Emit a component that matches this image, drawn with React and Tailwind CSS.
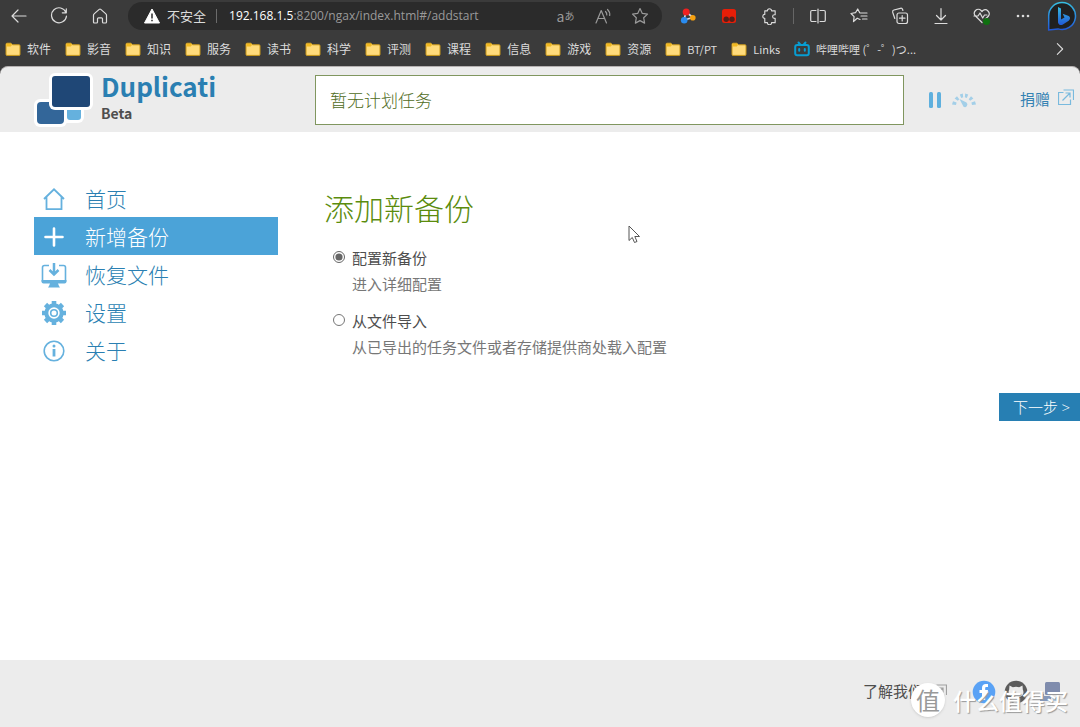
import { useState } from 'react'

const folders = ['软件', '影音', '知识', '服务', '读书', '科学', '评测', '课程', '信息', '游戏', '资源']

/* Browser icons */
const Line = ({ children, size = 18, className = '' }) => (
  <svg width={size} height={size} viewBox="0 0 18 18" fill="none" stroke="currentColor" strokeWidth="1.2" strokeLinecap="round" strokeLinejoin="round" className={className} aria-hidden="true">
    {children}
  </svg>
)

const BackIcon = () => <Line><path d="M16 9H2M8 3L2 9l6 6" /></Line>
const ReloadIcon = () => <Line><path d="M16 5.5A7.5 7.5 0 1 0 16.5 9M16.3 1.8v4h-4" /></Line>
const HomeIcon = () => <Line><path d="M2.500 8.200c0-.6.200-1 .6-1.300L8.200 2.400c.5-.4 1.100-.4 1.600 0l5.100 4.500c.4.3.6.7.6 1.300V15c0 .6-.4 1-1 1h-2c-.6 0-1-.4-1-1v-3.200c0-.6-.4-1-1-1h-3c-.6 0-1 .4-1 1V15c0 .6-.4 1-1 1h-2c-.6 0-1-.4-1-1z" /></Line>
const StarIcon = () => <Line><path d="M9 1.500l2.300 4.900 5.200.7-3.800 3.700.9 5.300L9 13.600l-4.600 2.500.9-5.300L1.500 7.100l5.200-.7z" /></Line>

const TranslateIcon = () => (
  <span className="flex items-center text-[14px] leading-none" aria-hidden="true">a<span className="text-[10px]">あ</span></span>
)

const ReadAloudIcon = () => (
  <Line>
    <path d="M2 16L7.200 3.500 12.500 16M4 11.500h6.800M11.500 4.500q1.500 1.500 1.300 3.500M13.500 2.500q2.700 2.500 2.200 6" />
  </Line>
)

const MoleculeIcon = () => (
  <svg width="16" height="16" viewBox="0 0 16 16" aria-hidden="true">
    <path d="M6 4L4 12M6 4l7 5.500M4 12l9-2.500" stroke="#d8d8e8" strokeWidth="1.600" />
    <circle cx="6.200" cy="4" r="3.500" fill="#f02020" />
    <circle cx="4.200" cy="12.200" r="3.300" fill="#2a8cf0" />
    <circle cx="12.800" cy="9.800" r="2.800" fill="#f5a010" />
  </svg>
)

const RedIcon = () => (
  <svg width="16" height="16" viewBox="0 0 16 16" aria-hidden="true">
    <rect x="1" y="1" width="14" height="14" rx="2.500" fill="#e61e08" />
    <circle cx="5.200" cy="11.200" r="2.700" fill="#53201b" />
    <circle cx="11" cy="11.200" r="2.700" fill="#53201b" />
  </svg>
)

const PuzzleIcon = () => (
  <Line size={17}>
    <path d="M4 3h2.800a2.200 2.200 0 0 1 4.400 0H15v4.200h-.800a1.900 1.900 0 0 0 0 3.800h.800v4.500h-3.800a2.200 2.200 0 0 1-4.400 0H4V11a2.100 2.100 0 0 1 0-4.200z" />
  </Line>
)
const SplitIcon = () => (
  <Line><path d="M7 3.500H3a1.300 1.300 0 0 0-1.300 1.300v8.400A1.300 1.300 0 0 0 3 14.500h4M11 3.500h4a1.300 1.300 0 0 1 1.300 1.300v8.400a1.300 1.300 0 0 1-1.300 1.300h-4M9 2v14" /></Line>
)
const FavoritesIcon = () => (
  <Line>
    <path d="M10 12.500l-2.800-1.300L3.500 14.500l.6-4.800L1 6.500l4.500-.8L7.700 2l2 3.800 3.800.2M11 9h6M11 6h6M12.500 12h4.500" />
  </Line>
)
const CollectionsIcon = () => (
  <Line>
    <rect x="6" y="6" width="10.500" height="10.500" rx="2" />
    <path d="M11.200 8.500v5.500M8.500 11.200H14M3.800 11.500L1.700 5.200a1.800 1.800 0 0 1 1.200-2.200l6.500-1.700a1.800 1.800 0 0 1 2.200 1.200l.3 1" />
  </Line>
)
const DownloadIcon = () => <Line><path d="M9 1.500v11M4.500 8.500L9 13l4.500-4.500M3 16.500h12" /></Line>
const HealthIcon = () => (
  <Line>
    <path d="M9 15.500L2.500 9a4 4 0 0 1 0-5.500 4 4 0 0 1 5.600 0L9 4.500l.9-1a4 4 0 0 1 5.600 5.500l-3 3M1 9h4l2-3 2.700 5L11.500 8H14" />
    <circle cx="13.500" cy="14.500" r="3.500" fill="#0f7010" stroke="none" />
  </Line>
)
const MoreIcon = () => (
  <Line>
    <g fill="currentColor" stroke="none">
      <circle cx="4" cy="9" r="1.300" />
      <circle cx="9" cy="9" r="1.300" />
      <circle cx="14" cy="9" r="1.300" />
    </g>
  </Line>
)

const BingIcon = () => (
  <svg width="30" height="30" viewBox="0 0 30 30" aria-hidden="true">
    <defs>
      <linearGradient id="bing" x1="0" y1="0" x2="0" y2="1">
        <stop offset="0" stopColor="#36bde0" />
        <stop offset="1" stopColor="#2158d8" />
      </linearGradient>
    </defs>
    <path d="M15 1.500a13.500 13.500 0 1 1-4 26.400L1.700 29V15A13.300 13.300 0 0 1 15 1.500z" fill="#202020" stroke="url(#bing)" strokeWidth="1.500" />
    <path d="M11 6l3 1.500v11l-3 3.300zM14 18.500l3.500-2-1.800-3.800 6 2.400c2 1.200 1.600 3.400 0 4.600l-6.200 4c-1.800 1-4.500 0-4.500-2.700z" fill="url(#bing)" />
  </svg>
)

const FolderIcon = () => (
  <svg width="16" height="16" viewBox="0 0 16 16" aria-hidden="true">
    <path d="M1 3.200c0-.6.400-1 1-1h4l1.500 1.600H14c.6 0 1 .4 1 1v8.600c0 .6-.4 1-1 1H2c-.6 0-1-.4-1-1z" fill="#ffdb7b" stroke="#c99718" />
    <path d="M1.500 2.700h4.300L7 4 5.800 5.500H1.500z" fill="#f2b91f" />
  </svg>
)

const BiliIcon = () => (
  <svg width="16" height="16" viewBox="0 0 16 16" fill="none" stroke="#089dd2" strokeWidth="2" strokeLinecap="round" aria-hidden="true">
    <rect x="1.200" y="4" width="13.600" height="10.200" rx="2" />
    <path d="M4.500 1.500l1.700 2M11.500 1.500l-1.700 2M5.200 8v1.800M10.800 8v1.800" />
  </svg>
)

/* Page icons */
const LogoIcon = () => (
  <svg width="60" height="54" viewBox="0 0 60 54" aria-hidden="true">
    <rect x="0" y="26" width="33" height="28" rx="6" fill="#fff" />
    <rect x="24" y="30" width="26" height="20" rx="6" fill="#fff" />
    <rect x="33" y="30" width="14" height="17" rx="3" fill="#65b1de" />
    <rect x="3" y="29" width="27" height="22" rx="4" fill="#336699" />
    <rect x="15" y="0" width="44" height="37" rx="6" fill="#fff" />
    <rect x="18" y="3" width="38" height="31" rx="3" fill="#1f4776" />
  </svg>
)

const NavHome = () => (
  <svg width="28" height="28" viewBox="0 0 28 28" fill="none" stroke="currentColor" strokeWidth="1.800" aria-hidden="true">
    <path d="M4 14L14 4.300 24 14M6.500 12v12.200h15V12" />
  </svg>
)
const NavAdd = () => (
  <svg width="28" height="28" viewBox="0 0 28 28" stroke="currentColor" strokeWidth="2.600" strokeLinecap="round" aria-hidden="true">
    <path d="M14 5.500v17M5.500 14h17" />
  </svg>
)
const NavRestore = () => (
  <svg width="28" height="28" viewBox="0 0 28 28" fill="none" stroke="currentColor" aria-hidden="true">
    <path d="M9 4.500H4.500a2 2 0 0 0-2 2V20h23V6.500a2 2 0 0 0-2-2H19" strokeWidth="1.600" />
    <path d="M1.500 19h25v1.500a2 2 0 0 1-2 2H18l1 2.500 1 1.500H8L9 25l1-2.500H3.500a2 2 0 0 1-2-2z" fill="currentColor" stroke="none" />
    <path d="M14 2v10.500M9.500 9L14 13.500 18.500 9" strokeWidth="2.500" />
  </svg>
)
const NavGear = () => (
  <svg width="28" height="28" viewBox="0 0 28 28" fill="none" stroke="currentColor" aria-hidden="true">
    <circle cx="14" cy="14" r="7.700" strokeWidth="4" />
    <circle cx="14" cy="14" r="3.300" strokeWidth="1.600" />
    <g strokeWidth="4.600">
      <path d="M14 2v4M14 22v4M2 14h4M22 14h4M5.500 5.500l3 3M19.500 19.500l3 3M5.500 22.500l3-3M19.500 8.500l3-3" />
    </g>
  </svg>
)
const NavInfo = () => (
  <svg width="28" height="28" viewBox="0 0 28 28" fill="none" stroke="currentColor" aria-hidden="true">
    <circle cx="14" cy="14" r="9.800" strokeWidth="1.600" />
    <path d="M14 12v7.500" strokeWidth="2.800" />
    <circle cx="14" cy="9" r="1.500" fill="currentColor" stroke="none" />
  </svg>
)

const ExternalIcon = ({ className }) => (
  <svg width="16" height="16" viewBox="0 0 16 16" fill="none" stroke="currentColor" strokeWidth="1.200" className={className} aria-hidden="true">
    <path d="M5.500 3.500h-5v12h12v-5M5.500 1h10v10M4.500 11.500L12 4M7.500 4H12v4.500" />
  </svg>
)

const PauseIcon = () => (
  <svg width="12" height="16" viewBox="0 0 12 16" fill="#5fb0de" aria-hidden="true">
    <rect width="4" height="16" rx="1.500" />
    <rect x="8" width="4" height="16" rx="1.500" />
  </svg>
)

const GaugeIcon = () => (
  <svg width="26" height="16" viewBox="0 0 26 16" fill="#a3cfe8" aria-hidden="true">
    <path d="M1 12.500l1-3.300 3.600 1.400-.6 2.400zM3.600 6.500L6 4.300l2.300 2.900-1.500 1.600zM8.800 2.500l3-1 .4 3.800-2 .6zM14.200 1.500l3 1-1.400 3.400-2-.6zM20 4.300l2.400 2.200-3.200 2.300-1.500-1.600zM24 9.200l1 3.300L21 13l-.6-2.400z" />
    <path d="M8.500 7l7 3.600a2.600 2.600 0 0 1-3 4.200z" />
  </svg>
)

const FacebookIcon = () => (
  <svg width="24" height="24" viewBox="0 0 24 24" aria-hidden="true">
    <circle cx="12" cy="12" r="11.300" fill="#5aa2f5" />
    <path d="M10 20v-7H7.500v-3H10V8c0-2.600 1.500-4 3.800-4h2.200v2.900h-1.500c-1 0-1.300.5-1.300 1.300V10h2.800l-.5 3h-2.300v7z" fill="#fff" />
  </svg>
)
const GithubIcon = () => (
  <svg width="24" height="24" viewBox="0 0 24 24" aria-hidden="true">
    <circle cx="12" cy="12" r="11.300" fill="#5c5c5c" />
    <path d="M5.500 5.500l3.300 1.700q3.200-.7 6.400 0l3.300-1.700.3 4q2.500 6-4.300 7.500V23h-5v-3q-3.500.5-4.500-2.500 2 1.500 4.500.5v-1q-6.800-1.500-4.300-7.500z" fill="#ececec" />
  </svg>
)
const ForumIcon = () => (
  <svg width="24" height="24" viewBox="0 0 24 24" aria-hidden="true">
    <rect x="5" y="2" width="15" height="13" rx="1.500" fill="#7f8cad" />
    <path d="M0 14h4v2h7v5H0z" fill="#8598ba" />
    <path d="M13 17h6v4h-6z" fill="#a8c4dd" />
  </svg>
)

const navItems = [
  { label: '首页', Icon: NavHome },
  { label: '新增备份', Icon: NavAdd, active: true },
  { label: '恢复文件', Icon: NavRestore },
  { label: '设置', Icon: NavGear },
  { label: '关于', Icon: NavInfo },
]

const options = [
  { id: 'new', title: '配置新备份', detail: '进入详细配置' },
  { id: 'import', title: '从文件导入', detail: '从已导出的任务文件或者存储提供商处载入配置' },
]

const ToolButton = ({ label, children }) => (
  <button type="button" aria-label={label} className="flex h-8 w-[41px] shrink-0 items-center justify-center">
    {children}
  </button>
)

const Bookmark = ({ icon, children }) => (
  <a href="#" className="flex shrink-0 items-center gap-1.5">
    {icon}
    {children}
  </a>
)

const BrowserBar = () => (
  <div className="text-[#dcdcdc]">
    {/* Address row */}
    <div className="flex h-8 items-center">
      <button type="button" aria-label="后退" className="flex h-8 w-[38px] shrink-0 items-center justify-center"><BackIcon /></button>
      <ToolButton label="刷新"><ReloadIcon /></ToolButton>
      <ToolButton label="主页"><HomeIcon /></ToolButton>
      <div className="ml-2 mr-[5px] flex h-7 min-w-0 flex-1 items-center rounded-full bg-[#2b2b2b] pl-4 pr-1 text-[13px]">
        <svg width="16" height="16" viewBox="0 0 16 16" className="shrink-0" aria-hidden="true">
          <path d="M8 1L15.500 15H.5z" fill="#fff" stroke="#fff" strokeLinejoin="round" />
          <path d="M8 5.500v5M8 11.800v1.500" stroke="#2b2b2b" strokeWidth="1.500" />
        </svg>
        <span className="ml-[7px] shrink-0">不安全</span>
        <span className="ml-2.5 h-3.5 w-px bg-[#6b6b6b]" />
        <span className="ml-3 min-w-0 flex-1 truncate font-['Open_Sans',sans-serif] text-[12px] text-[#9a9a9a]">
          <span className="text-white">192.168.1.5</span>:8200/ngax/index.html#/addstart
        </span>
        <div className="flex shrink-0 text-[#9a9a9a]">
          <button type="button" aria-label="翻译" className="flex w-[37px] items-center justify-center"><TranslateIcon /></button>
          <button type="button" aria-label="朗读" className="flex w-[37px] items-center justify-center"><ReadAloudIcon /></button>
          <button type="button" aria-label="收藏" className="flex w-[37px] items-center justify-center"><StarIcon /></button>
        </div>
      </div>
      <ToolButton label="扩展一"><MoleculeIcon /></ToolButton>
      <ToolButton label="扩展二"><RedIcon /></ToolButton>
      <ToolButton label="扩展"><PuzzleIcon /></ToolButton>
      <span className="mx-[3px] h-4 w-px bg-[#666]" />
      <ToolButton label="分屏"><SplitIcon /></ToolButton>
      <ToolButton label="收藏夹"><FavoritesIcon /></ToolButton>
      <ToolButton label="集锦"><CollectionsIcon /></ToolButton>
      <ToolButton label="下载"><DownloadIcon /></ToolButton>
      <ToolButton label="健康"><HealthIcon /></ToolButton>
      <ToolButton label="更多"><MoreIcon /></ToolButton>
      <button type="button" aria-label="Bing" className="flex w-[37px] shrink-0 items-center justify-center"><BingIcon /></button>
    </div>

    {/* Bookmarks row */}
    <div className="flex h-[34px] items-center gap-3.5 pl-[5px] pr-3 text-[12px]">
      {folders.map((name) => (
        <Bookmark key={name} icon={<FolderIcon />}>{name}</Bookmark>
      ))}
      <div className="flex items-center gap-3.5 text-[11px]">
        <Bookmark icon={<FolderIcon />}>BT/PT</Bookmark>
        <Bookmark icon={<FolderIcon />}>Links</Bookmark>
        <Bookmark icon={<BiliIcon />}>哔哩哔哩 (゜-゜)つ...</Bookmark>
      </div>
      <button type="button" aria-label="更多书签" className="ml-auto">
        <Line size={16}><path d="M6 3l6 6-6 6" /></Line>
      </button>
    </div>
  </div>
)

const Header = () => (
  <header className="flex h-[66px] items-center rounded-t-lg border-t border-[#b5b1b1] bg-[#ececec] pl-[34px] pr-1.5">
    <a href="#" className="flex w-[281px] shrink-0 items-center gap-[7px]">
      <LogoIcon />
      <span className="flex flex-col pb-1.5 font-bold">
        <span className="text-[26px] leading-8 text-[#2a7fb2]">Duplicati</span>
        <span className="text-[14px] leading-[22px] text-[#4e4e4e]">Beta</span>
      </span>
    </a>
    <div className="flex h-[50px] min-w-0 flex-1 items-center border border-[#80965f] bg-white px-3.5 text-[17px] font-light text-[#4f6b22]">
      暂无计划任务
    </div>
    <div className="ml-[25px] flex w-[91px] shrink-0 items-center gap-2.5">
      <button type="button" aria-label="暂停"><PauseIcon /></button>
      <button type="button" aria-label="限速"><GaugeIcon /></button>
    </div>
    <a href="#" className="flex shrink-0 items-start gap-2 pb-0.5 text-[15px] leading-6 text-[#3482b3]">
      捐赠
      <ExternalIcon className="mt-0.5 text-[#79bade]" />
    </a>
  </header>
)

const Sidebar = () => (
  <nav className="w-[244px] shrink-0 pt-[47px]">
    {navItems.map(({ label, Icon, active }) => (
      <a
        key={label}
        href="#"
        className={`flex h-[38px] items-center gap-[17px] pl-1.5 pt-px text-[21px] font-light ${active ? 'bg-[#4ba3d8] text-white' : 'text-[#2a7fb2]'}`}
      >
        <span className={active ? 'text-white' : 'text-[#65b1de]'}><Icon /></span>
        {label}
      </a>
    ))}
  </nav>
)

const AddBackup = () => {
  const [choice, setChoice] = useState('new')

  return (
    <main className="min-w-0 flex-1 pt-[52px]">
      <h1 className="text-[30px] font-light leading-[46px] text-[#5b8c0d]">添加新备份</h1>
      <form className="mt-[15px]">
        {options.map(({ id, title, detail }) => (
          <div key={id} className="mb-[11px] flex items-start pl-[9px]">
            <input
              type="radio"
              id={id}
              name="source"
              checked={choice === id}
              onChange={() => setChoice(id)}
              className="mt-1.5 h-3 w-3 accent-[#666]"
            />
            <label htmlFor={id} className="ml-[7px] text-[15px] leading-[26px] text-[#4e4e4e]">
              {title}
              <span className="block text-[#777]">{detail}</span>
            </label>
          </div>
        ))}
        <div className="mt-[33px] flex justify-end">
          <button type="button" className="h-7 bg-[#277fb3] pl-3.5 pr-2.5 text-[15px] font-light leading-7 text-white">
            下一步 <span className="font-['Open_Sans',sans-serif]">&gt;</span>
          </button>
        </div>
      </form>
    </main>
  )
}

const Footer = () => (
  <footer className="relative flex h-[67px] items-center justify-end gap-2 bg-[#ececec] pb-1 pr-4">
    <a href="#" className="mr-[17px] flex items-center gap-2 text-[15px] text-[#4e4e4e]">
      了解我们
      <ExternalIcon className="text-[#a0a0a0]" />
    </a>
    <a href="#" aria-label="Facebook"><FacebookIcon /></a>
    <a href="#" aria-label="GitHub"><GithubIcon /></a>
    <a href="#" aria-label="论坛" className="ml-1"><ForumIcon /></a>

    {/* Watermark */}
    <div className="pointer-events-none absolute right-3 top-[22px] flex items-center gap-2">
      <span className="flex h-[34px] w-[34px] items-center justify-center rounded-full bg-white text-[24px] leading-none text-[#999] shadow">值</span>
      <span className="text-[23px] font-medium leading-9 text-white [text-shadow:1px_1px_1px_#999]">什么值得买</span>
    </div>
  </footer>
)

/* Mouse pointer resting over the page */
const Pointer = () => (
  <svg width="13" height="19" viewBox="0 0 13 19" className="pointer-events-none absolute left-[628px] top-[225px]" aria-hidden="true">
    <path d="M1 1v14.500l3.300-3 2.200 5 2.500-1-2.200-5h4.700z" fill="#fff" stroke="#555" strokeLinejoin="round" />
  </svg>
)

export default function App() {
  return (
    <div className="relative flex min-h-screen flex-col bg-[#3b3b3b] font-['Noto_Sans_CJK_SC',sans-serif]">
      <BrowserBar />
      <Header />
      <div className="flex flex-1 bg-white pl-[34px]">
        <Sidebar />
        <div className="flex min-w-0 flex-1 pl-[46px]">
          <AddBackup />
        </div>
      </div>
      <Footer />
      <Pointer />
    </div>
  )
}
